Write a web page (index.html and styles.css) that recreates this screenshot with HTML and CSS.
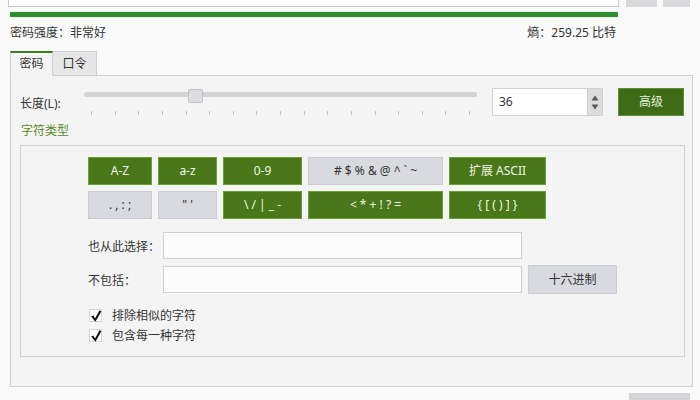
FILE: index.html
```html
<!DOCTYPE html>
<html lang="zh">
<head>
<meta charset="utf-8">
<link rel="stylesheet" href="styles.css">
</head>
<body>
<div class="top">
  <div class="pwd"></div>
  <div class="sbtn b1"></div>
  <div class="sbtn b2"></div>
</div>
<div class="bar"></div>
<div class="info"><span>密码强度：非常好</span><span>熵：259.25 比特</span></div>
<div class="tabs">
  <div class="tab active">密码</div>
  <div class="tab">口令</div>
</div>
<div class="pane">
  <div class="lenrow">
    <div class="lenlabel">长度(L):</div>
    <div class="slider">
      <div class="groove"></div>
      <div class="handle"></div>
      <div class="ticks">
        <i></i><i></i><i></i><i></i><i></i><i></i><i></i><i></i><i></i><i></i><i></i><i></i><i></i><i></i><i></i><i></i><i></i>
      </div>
    </div>
    <div class="spin">
      <span class="spinval">36</span>
      <span class="arrows">
        <svg width="8" height="6" viewBox="0 0 8 6"><path d="M4 0.5 L7.5 5.5 L0.5 5.5 Z" fill="#5a5a5a"/></svg>
        <svg width="8" height="6" viewBox="0 0 8 6"><path d="M0.5 0.5 L7.5 0.5 L4 5.5 Z" fill="#5a5a5a"/></svg>
      </span>
    </div>
    <div class="adv">高级</div>
  </div>
  <div class="grouptitle">字符类型</div>
  <div class="group">
    <div class="charbtns">
      <div class="cb on">A-Z</div>
      <div class="cb on">a-z</div>
      <div class="cb on">0-9</div>
      <div class="cb off"># $ % &amp; @ ^ ` ~</div>
      <div class="cb on">扩展 ASCII</div>
      <div class="cb off">. , : ;</div>
      <div class="cb off">" '</div>
      <div class="cb on">\ / | _ -</div>
      <div class="cb on">&lt; * + ! ? =</div>
      <div class="cb on">{ [ ( ) ] }</div>
    </div>
    <div class="field f1">
      <span class="flabel">也从此选择：</span>
      <div class="finput"></div>
    </div>
    <div class="field f2">
      <span class="flabel">不包括：</span>
      <div class="finput"></div>
      <div class="hexbtn">十六进制</div>
    </div>
    <div class="check c1">
      <span class="box"><svg width="14" height="14" viewBox="0 0 14 14"><path d="M2.2 7.6 L4.3 6.6 L6 9.4 L10.6 1.2 L12.4 2.2 L6.4 12.8 Z" fill="#111"/></svg></span>
      <span>排除相似的字符</span>
    </div>
    <div class="check">
      <span class="box"><svg width="14" height="14" viewBox="0 0 14 14"><path d="M2.2 7.6 L4.3 6.6 L6 9.4 L10.6 1.2 L12.4 2.2 L6.4 12.8 Z" fill="#111"/></svg></span>
      <span>包含每一种字符</span>
    </div>
  </div>
</div>
<div class="bottom"><div class="bbtn"></div></div>
</body>
</html>
```
FILE: styles.css
```css
html, body {
  margin: 0;
  padding: 0;
}
body {
  width: 700px;
  height: 400px;
  overflow: hidden;
  background: #fafafa;
  font-family: "Noto Sans", "Noto Sans CJK SC", sans-serif;
  font-size: 12px;
  color: #333;
}
.top {
  height: 7px;
  display: flex;
  align-items: flex-end;
  padding-left: 8px;
  overflow: hidden;
}
.pwd {
  width: 611px;
  height: 30px;
  box-sizing: border-box;
  border: 1px solid #c9c9c9;
  background: #fff;
  flex: none;
}
.sbtn {
  height: 20px;
  background: #d9d9dc;
  flex: none;
  align-self: flex-start;
  height: 7px;
}
.b1 { margin-left: 7px; width: 31px; }
.b2 { margin-left: 6px; width: 27px; }
.bar {
  margin: 5px 0 0 10px;
  width: 608px;
  height: 5px;
  background: #2f8d2f;
  border-radius: 1px;
  box-shadow: 0 0 1px #7cc37c;
}
.info {
  margin: 8px 0 0 10px;
  width: 606px;
  display: flex;
  justify-content: space-between;
  line-height: 16px;
  color: #333;
}
.tabs {
  margin-top: 10px;
  padding-left: 10px;
  display: flex;
  position: relative;
  z-index: 1;
  margin-bottom: -1px;
}
.tab {
  height: 25px;
  box-sizing: border-box;
  line-height: 23px;
  text-align: center;
  border: 1px solid #cdcdcd;
  border-left: none;
  background: #e6e6e6;
  color: #333;
}
.tab.active {
  width: 43px;
  border-left: 1px solid #cdcdcd;
  border-top: 2px solid #3e7a22;
  border-bottom-color: #f4f4f4;
  background: #f4f4f4;
  line-height: 22px;
}
.tab:not(.active) {
  width: 44px;
}
.pane {
  margin-left: 10px;
  width: 683px;
  height: 312px;
  box-sizing: border-box;
  border: 1px solid #cfcfcf;
  background: #f4f4f4;
  padding: 12px 7px 0 9px;
}
.lenrow {
  display: flex;
  align-items: center;
  height: 28px;
}
.lenlabel {
  width: 64px;
  flex: none;
  color: #333;
  padding-top: 2px;
}
.slider {
  position: relative;
  width: 393px;
  height: 28px;
  flex: none;
}
.groove {
  position: absolute;
  left: 0;
  right: 0;
  top: 4px;
  height: 5px;
  background: #d3d3d3;
  border-radius: 3px;
}
.handle {
  position: absolute;
  left: 104px;
  top: 1px;
  width: 15px;
  height: 14px;
  box-sizing: border-box;
  background: #dedee2;
  border: 1px solid #c2c2c6;
  border-radius: 2px;
}
.ticks {
  position: absolute;
  left: 7px;
  right: 7px;
  top: 23px;
  height: 4px;
  display: flex;
  justify-content: space-between;
}
.ticks i {
  width: 1px;
  height: 4px;
  background: #c4c4c4;
}
.spin {
  margin-left: 15px;
  width: 111px;
  height: 28px;
  box-sizing: border-box;
  border: 1px solid #d2d2d2;
  background: #fff;
  display: flex;
  flex: none;
}
.spinval {
  flex: 1;
  padding-left: 6px;
  line-height: 26px;
  color: #333;
}
.arrows {
  width: 14px;
  background: #dcdcdf;
  border-left: 1px solid #cfcfd2;
  display: flex;
  flex-direction: column;
  align-items: center;
  justify-content: center;
  gap: 3px;
}
.arrows svg { display: block; }
.adv {
  margin-left: 15px;
  width: 66px;
  height: 28px;
  box-sizing: border-box;
  background: #3d6b16;
  border: 1px solid #5b8e2c;
  color: #e4f0da;
  text-align: center;
  line-height: 26px;
  flex: none;
}
.grouptitle {
  margin-top: 7px;
  padding-left: 1px;
  line-height: 16px;
  color: #5a8d22;
}
.group {
  margin-top: 6px;
  height: 212px;
  box-sizing: border-box;
  border: 1px solid #d2d2d2;
  padding: 11px 0 0 67px;
}
.charbtns {
  display: grid;
  grid-template-columns: 64px 59px 79px 135px 97px;
  grid-template-rows: 28px 28px;
  gap: 6px;
}
.cb {
  box-sizing: border-box;
  text-align: center;
  line-height: 26px;
  border: 1px solid;
}
.cb.on {
  background: #4a7719;
  border-color: #69a233;
  color: #eef6e4;
}
.cb.off {
  background: #d9dadf;
  border-color: #cacbd0;
  color: #333;
}
.field {
  display: flex;
  align-items: center;
}
.f1 { margin-top: 13px; }
.f2 { margin-top: 6px; }
.flabel {
  width: 75px;
  flex: none;
  color: #333;
}
.finput {
  width: 359px;
  height: 27px;
  box-sizing: border-box;
  border: 1px solid #cfcfcf;
  background: #fbfbfb;
  flex: none;
}
.hexbtn {
  margin-left: 6px;
  width: 89px;
  height: 29px;
  box-sizing: border-box;
  background: #d9dadf;
  border: 1px solid #cdced3;
  text-align: center;
  line-height: 27px;
  color: #333;
}
.check {
  display: flex;
  align-items: center;
  height: 20px;
  color: #333;
}
.c1 { margin-top: 11px; }
.box {
  width: 13px;
  height: 13px;
  box-sizing: border-box;
  border: 1px solid #d6d6d6;
  background: #fff;
  margin-left: 1px;
  margin-right: 10px;
  position: relative;
  flex: none;
}
.box svg {
  position: absolute;
  left: -1px;
  top: -1px;
}
.bottom {
  display: flex;
  justify-content: flex-end;
  margin-top: 6px;
  padding-right: 10px;
}
.bbtn {
  width: 61px;
  height: 20px;
  background: #d6d6d9;
}
```
